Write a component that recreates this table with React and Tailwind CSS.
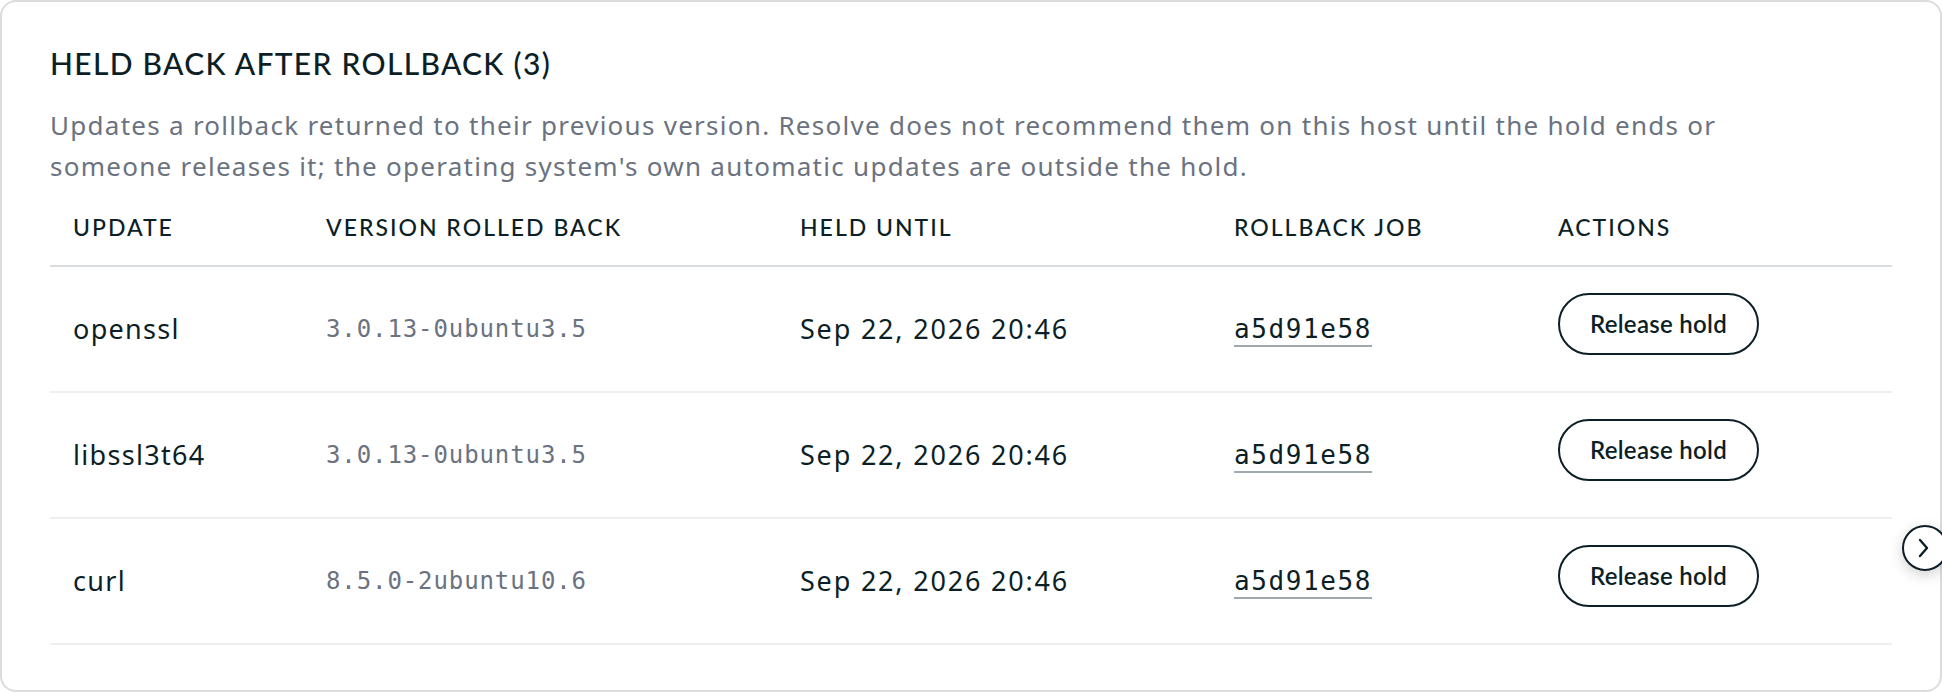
import React from "react";

const rows = [
  { name: "openssl", version: "3.0.13-0ubuntu3.5" },
  { name: "libssl3t64", version: "3.0.13-0ubuntu3.5" },
  { name: "curl", version: "8.5.0-2ubuntu10.6" },
];

const grid = "grid grid-cols-[252px_474px_434px_324px_1fr] items-center";

export default function App() {
  return (
    <div className="relative w-[1942px] h-[692px] bg-white overflow-hidden">
      <div
        className="h-full rounded-[16px] border-2 border-[#dcdcdc] bg-white pl-[48px] pr-[48px] pt-[41px] text-[#0c1f26]"
        style={{ fontFamily: "'Noto Sans', sans-serif" }}
      >
        <h2
          className="text-[30px] leading-[40px] font-medium tracking-[1.3px]"
          style={{ fontFamily: "Lato, sans-serif" }}
        >
          HELD BACK AFTER ROLLBACK (3)
        </h2>
        <p className="mt-[22px] max-w-[1720px] text-[26px] leading-[41px] text-[#6b7280] tracking-[1.27px]">
          Updates a rollback returned to their previous version. Resolve does not recommend them on this host until the hold ends or someone releases it; the operating system's own automatic updates are outside the hold.
        </p>
        <div>
          <div
            className={`${grid} h-[80px] border-b-2 border-[#dadddf] text-[23px] font-medium tracking-[2px] pt-[2px]`}
            style={{ fontFamily: "Lato, sans-serif" }}
          >
            <div className="pl-[23px]">UPDATE</div>
            <div className="pl-[24px]">VERSION ROLLED BACK</div>
            <div className="pl-[24px]">HELD UNTIL</div>
            <div className="pl-[24px]">ROLLBACK JOB</div>
            <div className="pl-[24px]">ACTIONS</div>
          </div>
          {rows.map((r) => (
            <div key={r.name} className={`${grid} h-[126px] border-b-2 border-[#efefef]`}>
              <div className="pl-[23px] text-[27px] tracking-[1.3px]">{r.name}</div>
              <div
                className="pl-[24px] text-[24px] text-[#6b7280] tracking-[0.9px]"
                style={{ fontFamily: "'DejaVu Sans Mono', monospace" }}
              >
                {r.version}
              </div>
              <div className="pl-[24px] text-[27px] tracking-[1.8px]">Sep 22, 2026 20:46</div>
              <div className="pl-[24px]">
                <span
                  className="text-[26px] tracking-[1.6px] border-b-2 border-[#a0a9ae] pb-[1px]"
                  style={{ fontFamily: "'DejaVu Sans Mono', monospace" }}
                >
                  a5d91e58
                </span>
              </div>
              <div className="pl-[24px] pb-[10px]">
                <button
                  className="w-[201px] h-[62px] rounded-full border-2 border-[#0c1f26] text-[24px] font-semibold tracking-[0.3px] text-[#0c1f26]"
                  style={{ fontFamily: "Lato, sans-serif" }}
                >
                  Release hold
                </button>
              </div>
            </div>
          ))}
        </div>
      </div>
      <button className="absolute left-[1902px] top-[525px] w-[46px] h-[46px] rounded-full border-2 border-[#0c1f26] bg-white shadow-[0_4px_14px_rgba(0,0,0,0.18)] flex items-center justify-center pr-[4px]">
        <svg width="24" height="24" viewBox="0 0 24 24" fill="none" stroke="#0c1f26" strokeWidth="2.4" strokeLinecap="round" strokeLinejoin="round">
          <path d="M9 4l7 8-7 8" />
        </svg>
      </button>
    </div>
  );
}
